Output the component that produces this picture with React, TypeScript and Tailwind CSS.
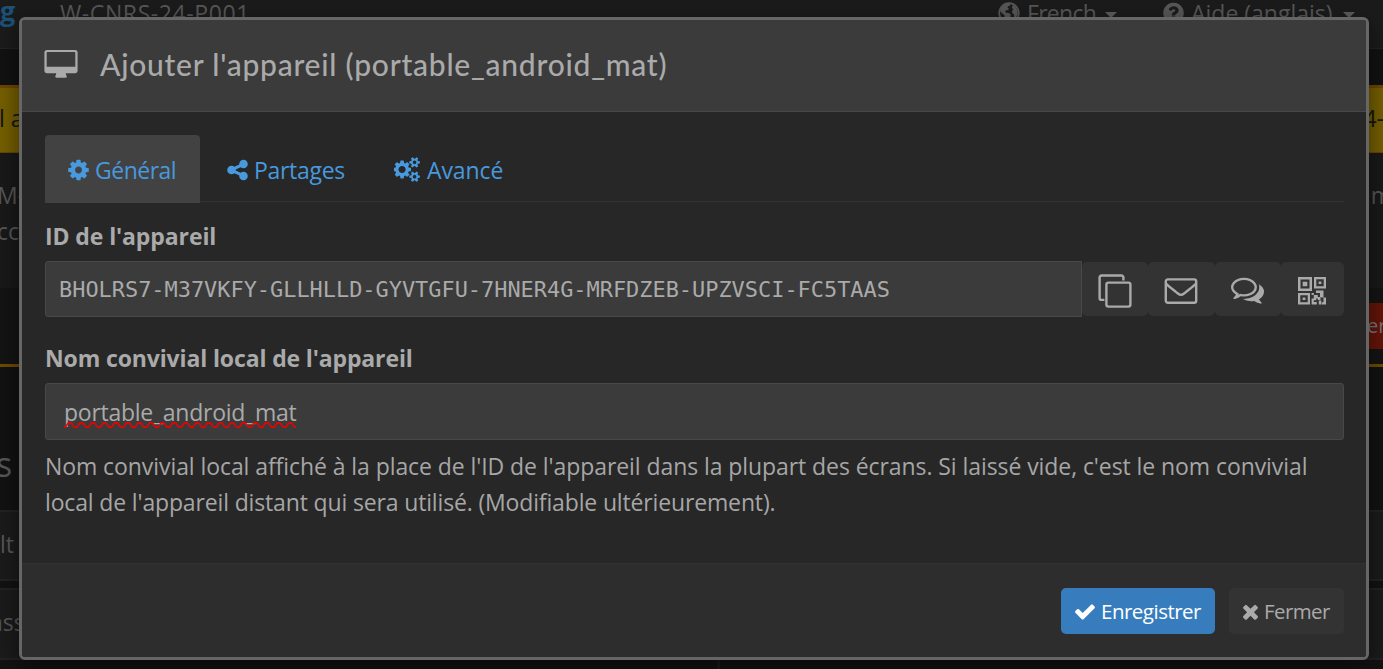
import React from "react";

const sans = "font-['Open_Sans',sans-serif]";

type GlyphProps = { d: string; box: string; className?: string };

function Glyph({ d, box, className = "" }: GlyphProps) {
  return (
    <svg viewBox={box} className={`shrink-0 fill-current ${className}`} aria-hidden="true">
      <path d={d} />
    </svg>
  );
}

const COG =
  "M1152 896q0-106-75-181t-181-75-181 75-75 181 75 181 181 75 181-75 75-181zm512-109v222q0 12-8 23t-20 13l-185 28q-19 54-39 91 35 50 107 138 10 12 10 25t-9 23q-27 37-99 108t-94 71q-12 0-26-9l-138-108q-44 23-91 38-16 136-29 186-7 28-36 28h-222q-14 0-24.5-8.5t-11.5-21.5l-28-184q-49-16-90-37l-141 107q-10 9-25 9-14 0-25-11-126-114-165-168-7-10-7-23 0-12 8-23 15-21 51-66.5t54-70.5q-27-50-41-99l-183-27q-13-2-21-12.5t-8-23.5v-222q0-12 8-23t19-13l186-28q14-46 39-92-40-57-107-138-10-12-10-24 0-10 9-23 26-36 98.5-107.5t94.5-71.5q13 0 26 10l138 107q44-23 91-38 16-136 29-186 7-28 36-28h222q14 0 24.5 8.5t11.5 21.5l28 184q49 16 90 37l142-107q9-9 24-9 13 0 25 10 129 119 165 170 7 8 7 22 0 12-8 23-15 21-51 66.5t-54 70.5q26 50 41 98l183 28q13 2 21 12.5t8 23.5z";
const COGS =
  "M832 896q0-106-75-181t-181-75-181 75-75 181 75 181 181 75 181-75 75-181zm768 512q0-52-38-90t-90-38-90 38-38 90q0 53 37.5 90.5t90.5 37.5 90.5-37.5 37.5-90.5zm0-1024q0-52-38-90t-90-38-90 38-38 90q0 53 37.5 90.5t90.5 37.5 90.5-37.5 37.5-90.5zm-384 421v185q0 10-7 19.5t-16 10.5l-155 24q-11 35-32 76 34 48 90 115 7 11 7 20 0 12-7 19-23 30-82.5 89.5t-78.5 59.5q-11 0-21-7l-115-90q-37 19-77 31-11 108-23 155-7 24-30 24h-186q-11 0-20-7.5t-10-17.5l-23-153q-34-10-75-31l-118 89q-7 7-20 7-11 0-21-8-144-133-144-160 0-9 7-19 10-14 41-53t47-61q-23-44-35-82l-152-24q-10-1-17-9.5t-7-19.5v-185q0-10 7-19.5t16-10.5l155-24q11-35 32-76-34-48-90-115-7-11-7-20 0-12 7-20 22-30 82-89t79-59q11 0 21 7l115 90q34-18 77-32 11-108 23-154 7-24 30-24h186q11 0 20 7.5t10 17.5l23 153q34 10 75 31l118-89q8-7 20-7 11 0 21 8 144 133 144 160 0 8-7 19-12 16-42 54t-45 60q23 48 34 82l152 23q10 2 17 10.5t7 19.5zm640 533v140q0 16-149 31-12 27-30 52 51 113 51 138 0 4-4 7-122 71-124 71-8 0-46-47t-52-68q-20 2-30 2t-30-2q-14 21-52 68t-46 47q-2 0-124-71-4-3-4-7 0-25 51-138-18-25-30-52-149-15-149-31v-140q0-16 149-31 13-29 30-52-51-113-51-138 0-4 4-7 4-2 35-20t59-34 30-16q8 0 46 46.5t52 67.5q20-2 30-2t30 2q51-71 92-112l6-2q4 0 124 70 4 3 4 7 0 25-51 138 17 23 30 52 149 15 149 31zm0-1024v140q0 16-149 31-12 27-30 52 51 113 51 138 0 4-4 7-122 71-124 71-8 0-46-47t-52-68q-20 2-30 2t-30-2q-14 21-52 68t-46 47q-2 0-124-71-4-3-4-7 0-25 51-138-18-25-30-52-149-15-149-31v-140q0-16 149-31 13-29 30-52-51-113-51-138 0-4 4-7 4-2 35-20t59-34 30-16q8 0 46 46.5t52 67.5q20-2 30-2t30 2q51-71 92-112l6-2q4 0 124 70 4 3 4 7 0 25-51 138 17 23 30 52 149 15 149 31z";
const SHARE =
  "M1344 1024q133 0 226.5 93.5t93.5 226.5-93.5 226.5-226.5 93.5-226.5-93.5-93.5-226.5q0-12 2-34l-360-180q-92 86-218 86-133 0-226.5-93.5t-93.5-226.5 93.5-226.5 226.5-93.5q126 0 218 86l360-180q-2-22-2-34 0-133 93.5-226.5t226.5-93.5 226.5 93.5 93.5 226.5-93.5 226.5-226.5 93.5q-126 0-218-86l-360 180q2 22 2 34t-2 34l360 180q92-86 218-86z";
const CHECK =
  "M1671 566q0 40-28 68l-724 724-136 136q-28 28-68 28t-68-28l-136-136-362-362q-28-28-28-68t28-68l136-136q28-28 68-28t68 28l294 295 656-657q28-28 68-28t68 28l136 136q28 28 28 68z";
const TIMES =
  "M1490 1322q0 40-28 68l-136 136q-28 28-68 28t-68-28l-294-294-294 294q-28 28-68 28t-68-28l-136-136q-28-28-28-68t28-68l294-294-294-294q-28-28-28-68t28-68l136-136q28-28 68-28t68 28l294 294 294-294q28-28 68-28t68 28l136 136q28 28 28 68t-28 68l-294 294 294 294q28 28 28 68z";
const QUESTION =
  "M1024 1376v-192q0-14-9-23t-23-9h-192q-14 0-23 9t-9 23v192q0 14 9 23t23 9h192q14 0 23-9t9-23zm256-672q0-88-55.5-163t-138.5-116-170-41q-243 0-371 213-15 24 8 42l132 100q7 6 19 6 16 0 25-12 53-68 86-92 34-24 86-24 48 0 85.5 26t37.5 59q0 38-20 61t-68 45q-63 28-115.5 86.5t-52.5 125.5v36q0 14 9 23t23 9h192q14 0 23-9t9-23q0-19 21.5-49.5t54.5-49.5q32-18 49-28.5t46-35 44.5-48 28-60.5 12.5-81zm384 192q0 209-103 385.5t-279.5 279.5-385.5 103-385.5-103-279.5-279.5-103-385.5 103-385.5 279.5-279.5 385.5-103 385.5 103 279.5 279.5 103 385.5z";
const COMMENTS =
  "M704 384q-153 0-286 52t-211.5 141-78.5 191q0 82 53 158t149 132l97 56-35 84q34-20 62-39l44-31 53 10q78 14 153 14 153 0 286-52t211.5-141 78.5-191-78.5-191-211.5-141-286-52zm0-128q191 0 353.5 68.5t256.5 186.5 94 257-94 257-256.5 186.5-353.5 68.5q-86 0-176-16-124 88-278 128-36 9-86 16h-3q-11 0-20.5-8t-11.5-21q-1-3-1-6.5t.5-6.5 2-6l2.5-5 3.5-5.5 4-5 4.5-5 4-4.5q5-6 23-25t26-29.5 22.5-29 25-38.5 20.5-44q-124-72-195-177t-71-224q0-139 94-257t256.5-186.5 353.5-68.5zm822 1169q10 24 20.5 44t25 38.5 22.5 29 26 29.5 23 25q1 1 4 4.5t4.5 5 4 5 3.5 5.5l2.5 5 2 6 .5 6.5-1 6.5q-3 14-13 22t-22 7q-50-7-86-16-154-40-278-128-90 16-176 16-271 0-472-132 58 4 88 4 161 0 309-45t264-129q125-92 192-212t67-254q0-77-23-152 129 71 204 178t75 230q0 120-71 224.5t-195 176.5z";

function GlobeIcon() {
  return (
    <svg viewBox="0 0 22 22" className="mr-[7px] size-[22px] shrink-0" aria-hidden="true">
      <circle cx="11" cy="11" r="9.800" fill="none" stroke="currentColor" strokeWidth="1.700" />
      <path
        fill="currentColor"
        d="M8 2l3-.6 1.500 1.300-1 1.300-1.500.3-.5 1.600 1.500.7-.8 1.400-2 .2-1.200 1.600 1.200 1 2.600.2 2 1.600-.4 2.400-2 1.400-.8 2.600-1.600.4-1.200-4-.6-2.600-2-1.400L2 9l1-3.600zM14.500 3l2.800 1.400 2 3.600.5 4-2.200 4.400-1.600-.6.200-3-1.700-1.400-.5-2.400 1.400-1.700-1.400-1.200z"
      />
    </svg>
  );
}

function DesktopIcon() {
  return (
    <svg viewBox="0 0 34 30" className="h-[30px] w-[34px] shrink-0" aria-hidden="true">
      <path
        fillRule="evenodd"
        fill="currentColor"
        d="M3 1h28a2.600 2.600 0 0 1 2.600 2.600v18a2.600 2.600 0 0 1-2.600 2.600h-9.200c0 1.800 1 2.600 1 3.300 0 .8-.5 1.200-1.200 1.200h-9.200c-.7 0-1.200-.4-1.200-1.200 0-.7 1-1.500 1-3.300H3A2.600 2.600 0 0 1 .4 21.600v-18A2.600 2.600 0 0 1 3 1zM3.400 3.100a.7.7 0 0 0-.7.7v14h28.600v-14a.7.7 0 0 0-.7-.7z"
      />
    </svg>
  );
}

function CloneIcon() {
  return (
    <svg viewBox="0 0 34 34" className="h-[34px] w-[34px]" fill="none" stroke="currentColor" strokeWidth="2.400" aria-hidden="true">
      <rect x="8.400" y="8.600" width="24" height="24" rx="2" />
      <path d="M25.400 6.500V3.500a2 2 0 0 0-2-2H3.600a2 2 0 0 0-2 2v20.400a2 2 0 0 0 2 2h2.800" />
    </svg>
  );
}

function EnvelopeIcon() {
  return (
    <svg viewBox="0 0 34 28" className="h-[28px] w-[34px]" fill="none" stroke="currentColor" strokeWidth="2.400" aria-hidden="true">
      <rect x="1.800" y="2.400" width="30.400" height="23.400" rx="2" />
      <path d="M2 6.400c1.600 2 9.400 8 11.600 9.900 1.300 1 2.200 1.600 3.400 1.600s2.100-.6 3.400-1.600c2.200-1.900 10-7.900 11.600-9.900" />
    </svg>
  );
}

function QrIcon() {
  return (
    <svg viewBox="0 0 28 28" className="h-[28px] w-[28px]" fill="currentColor" aria-hidden="true">
      <path
        fillRule="evenodd"
        d="M0 0h14v14H0zM2.500 2.500v9h9v-9zM4.700 4.700h4.600v4.600H4.700zM16 0h12v11.500H16zM18.300 2.300v7h7.400v-7zM20.600 4.400h2.800v2.700h-2.800zM0 16h12v11.500H0zM2.300 18.300v7h7.400v-7zM4.600 20.400h2.800v2.700H4.600zM18 13.500h7.500v7H22V16h-4zM13.600 16h2.200v2h-2.200zM15.800 18h4v2h2.700v3h-2.700v-1.500h-1.600v1.700h-2.400zM13.600 21.500h2.200v3.500h3v2.500h-5.200zM20.800 23.500h2.500v4h-2.500zM25.500 20.500H28v7h-4.200v-2.200h1.700z"
      />
    </svg>
  );
}

function Caret() {
  return <span className="mt-[3px] border-x-6 border-t-6 border-x-transparent border-t-[#5c5c5c]" />;
}

function Backdrop() {
  return (
    <div className="flex h-full flex-col bg-[#121212] text-[23px] leading-9 text-[#575757]" aria-hidden="true">
      <div className="flex h-[49px] shrink-0 items-start border-b border-[#232323] bg-[#1b1b1b] whitespace-nowrap">
        <span className="mt-[-7px] w-[60px] text-[27px] font-bold text-[#1c5178]">g</span>
        <span className="mt-[-5px] w-[938px] tracking-[0.6px]">W-CNRS-24-P001</span>
        <span className="mt-[-5px] flex w-[165px] items-center">
          <GlobeIcon />
          <span className="mr-[9px] tracking-[-0.7px]">French</span>
          <Caret />
        </span>
        <span className="mt-[-5px] flex items-center">
          <Glyph d={QUESTION} box="128 0 1536 1792" className="mr-[7px] h-[24px] w-[21px]" />
          <span className="mr-[10px]">Aide (anglais)</span>
          <Caret />
        </span>
      </div>
      <div className="mt-9 flex h-[68px] shrink-0 items-center justify-between border-t-3 border-b border-[#6e4500] bg-[#755f00] pb-1 text-[#141414]">
        <span className="-ml-px">l a</span>
        <span className="-mr-px">4-</span>
      </div>
      <div className="flex h-[135px] shrink-0 flex-col bg-[#191919] pt-6">
        <div className="flex justify-between">
          <span className="-ml-[3px]">M-</span>
          <span className="-mr-[9px]">m</span>
        </div>
        <span className="-ml-[3px]">cc</span>
      </div>
      <div className="flex h-[79px] shrink-0 items-end justify-end border-b-3 border-[#6e4b00] bg-[#141414] pb-[15px]">
        <span className="flex h-[46px] w-[20px] items-center overflow-hidden bg-[#641508] pl-1 text-[20px] text-[#777]">er</span>
      </div>
      <div className="flex h-[143px] shrink-0 items-end pb-[20px]">
        <span className="-ml-1 text-[34px] leading-[52px]">s</span>
      </div>
      <div className="flex h-[71px] shrink-0 items-center border-y-2 border-[#222] bg-[#1b1b1b] pb-1">
        <span>lt</span>
      </div>
      <div className="mt-[7px] flex h-[72px] shrink-0 items-center border-y-2 border-[#222] bg-[#1b1b1b] pb-1">
        <span className="-ml-[10px]">ass</span>
      </div>
      <div className="flex h-2.5 shrink-0 pl-[717px]">
        <span className="w-[3px] bg-[#1b1b1b]" />
      </div>
    </div>
  );
}

const actions = [
  { label: "Copier", icon: <CloneIcon /> },
  { label: "Courriel", icon: <EnvelopeIcon /> },
  { label: "SMS", icon: <Glyph d={COMMENTS} box="0 0 1792 1792" className="mb-[2px] h-[33px] w-[33px]" /> },
  { label: "QR", icon: <QrIcon /> },
];

export default function App() {
  return (
    <div className={`relative h-[669px] w-[1383px] overflow-hidden ${sans}`}>
      <Backdrop />
      <div className="absolute top-[17px] left-[19px] flex h-[643px] w-[1350px] flex-col overflow-hidden rounded-md border-3 border-[#666] bg-[#272727] text-[23px] text-[#aaa] shadow-[0_8px_23px_rgba(0,0,0,0.5)]">
        <header className="flex h-[92px] shrink-0 items-center gap-[22px] border-b border-[#484848] bg-[#3b3b3b] pl-[22px]">
          <span className="mt-[-3px]"><DesktopIcon /></span>
          <h4 className="mt-[-3px] font-['Lato',sans-serif] text-[30px] leading-9 font-medium tracking-[0.76px] whitespace-nowrap">
            Ajouter l'appareil (portable_android_mat)
          </h4>
        </header>

        <main className="flex flex-1 flex-col pt-[23px] pr-[22px] pl-[23px]">
          <nav className="flex h-[67px] shrink-0 border-b border-[#333] text-[#4899dd]">
            <a className="flex h-[68px] w-[155px] items-center rounded-t bg-[#424242] pb-px pl-[23px] whitespace-nowrap">
              <Glyph d={COG} box="128 0 1536 1792" className="mt-[2px] mr-[6px] h-[24px] w-[21px]" />
              <span className="mt-[4px] tracking-[-0.5px]">Général</span>
            </a>
            <a className="flex h-[68px] items-center pb-px pl-[27px] whitespace-nowrap">
              <Glyph d={SHARE} box="128 0 1536 1792" className="mt-[2px] mr-[6px] h-[24px] w-[21px]" />
              <span className="mt-[4px] tracking-[-0.3px]">Partages</span>
            </a>
            <a className="flex h-[68px] items-center pb-px pl-[49px] whitespace-nowrap">
              <Glyph d={COGS} box="0 0 1856 1792" className="mt-[2px] mr-[7px] h-[25px] w-[26px]" />
              <span className="mt-[4px] tracking-[-0.1px]">Avancé</span>
            </a>
          </nav>

          <label className="mt-[16px] mb-px h-9 leading-9 font-bold tracking-[-0.1px]">ID de l'appareil</label>
          <div className="mt-[6px] flex h-14 shrink-0 items-center">
            <div className="flex h-14 w-[1037px] shrink-0 items-center rounded-l-[3px] border border-[#484848] bg-[#3b3b3b] pt-[2px] pl-[13px] font-['DejaVu_Sans_Mono',monospace] text-[21.92px] whitespace-nowrap">
              BHOLRS7-M37VKFY-GLLHLLD-GYVTGFU-7HNER4G-MRFDZEB-UPZVSCI-FC5TAAS
            </div>
            {actions.map((a, i) => (
              <button
                key={a.label}
                aria-label={a.label}
                className={`flex h-[54px] shrink-0 items-center justify-center rounded-[5px] bg-[#333] pt-[3px] ${i === 3 ? "w-[63px]" : "w-[66.3px]"}`}
              >
                {a.icon}
              </button>
            ))}
          </div>

          <label className="mt-[23px] mb-px h-9 leading-9 font-bold tracking-[-0.13px]">Nom convivial local de l'appareil</label>
          <div className="mt-[6px] flex h-[57px] shrink-0 items-center rounded-[3px] border border-[#484848] bg-[#3b3b3b] pl-[18px]">
            <span className="relative mt-[2px] tracking-[-0.26px]">
              portable_android_mat
              <svg viewBox="0 0 232 6" className="absolute bottom-[2px] left-0 h-[6px] w-[232px]" fill="none" aria-hidden="true">
                <defs>
                  <pattern id="wave" width="11.600" height="6" patternUnits="userSpaceOnUse">
                    <path d="M-1.450 3C0 6 1.450 6 2.900 3S7.250 0 8.700 3 13.050 6 14.500 3" stroke="#f00000" strokeWidth="1.700" />
                  </pattern>
                </defs>
                <rect width="232" height="6" fill="url(#wave)" />
              </svg>
            </span>
          </div>
          <p className="mt-[8px] text-[23px] leading-9 tracking-[-0.075px] whitespace-nowrap text-[#a6a6a6]">
            Nom convivial local affiché à la place de l'ID de l'appareil dans la plupart des écrans. Si laissé vide, c'est le nom convivial
            <br />
            <span className="tracking-[-0.15px]">local de l'appareil distant qui sera utilisé. (Modifiable ultérieurement).</span>
          </p>
        </main>

        <footer className="flex h-[94px] shrink-0 items-center justify-end gap-[14px] border-t border-[#323232] bg-[#2d2d2d] pr-[22px] text-[20.500px]">
          <button className="flex h-[46px] w-[154px] items-center rounded-[5px] bg-[#377dbd] pl-[14px] tracking-[-0.5px] whitespace-nowrap text-white">
            <Glyph d={CHECK} box="121 0 1550 1792" className="mt-px mr-[6px] h-[23px] w-[20px]" />
            <span className="mt-[2px]">Enregistrer</span>
          </button>
          <button className="flex h-[46px] w-[115px] items-center rounded-[5px] bg-[#333] pl-[14px] tracking-[-0.6px] whitespace-nowrap">
            <Glyph d={TIMES} box="302 0 1188 1792" className="mt-px mr-[6px] h-[23px] w-[15px]" />
            <span className="mt-[2px]">Fermer</span>
          </button>
        </footer>
      </div>
    </div>
  );
}
